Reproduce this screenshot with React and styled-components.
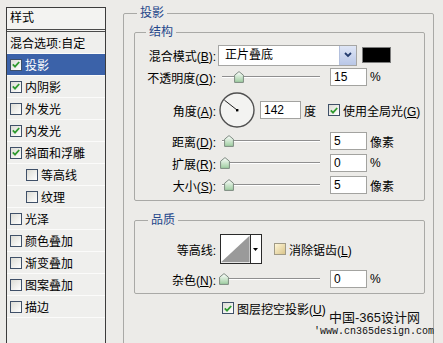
import React from "react"
import styled, { createGlobalStyle } from "styled-components"

const uiFont = `"Liberation Sans", "Noto Sans CJK SC", sans-serif`
const legendBlue = "#24468a"

const GlobalStyle = createGlobalStyle`
  html, body {
    margin: 0;
    padding: 0;
    background: #ecebe8;
    overflow: hidden;
  }
  body {
    font-family: ${uiFont};
    font-size: 12px;
    color: #000;
  }
`

const Screen = styled.div`
  position: relative;
  width: 443px;
  height: 343px;
  display: flex;
  align-items: flex-start;
  gap: 17px;
  padding-left: 6px;
  box-sizing: border-box;
  overflow: hidden;
`

/* ---------- left style list ---------- */

const StyleList = styled.div`
  flex: none;
  width: 100px;
  height: 360px;
  margin-top: 7px;
  box-sizing: border-box;
  border: 1px solid #3c3c3c;
  background: #efefed;
`

const ListHeader = styled.div`
  height: 21px;
  line-height: 21px;
  padding-left: 3px;
  border-bottom: 3px double #4a4a4a;
  background: #f3f3f1;
`

const ListRow = styled.div`
  display: flex;
  align-items: center;
  gap: 3px;
  height: 21px;
  padding-left: ${(p) => (p.$indent ? 19 : 3)}px;
  border-bottom: 1px solid #fbfbfa;
  background: ${(p) => (p.$active ? "#3b62a9" : "transparent")};
  color: ${(p) => (p.$active ? "#fff" : "#000")};
`

const Box = styled.span`
  flex: none;
  display: inline-flex;
  align-items: center;
  justify-content: center;
  width: 12px;
  height: 12px;
  box-sizing: border-box;
  border: 1px solid ${(p) => (p.$beige ? "#a09a86" : "#3f5068")};
  background: ${(p) =>
    p.$beige
      ? "linear-gradient(135deg, #fff6d8, #d9c48a)"
      : "linear-gradient(135deg, #dcdcd5, #ffffff)"};
`

const Check = ({ on, beige }) => (
  <Box $beige={beige}>
    {on && (
      <svg width="8" height="7" viewBox="0 0 8 7">
        <path d="M0.8 3.4 L3 5.6 L7.2 1" fill="none" stroke="#2f9a2f" strokeWidth="1.8" />
      </svg>
    )}
  </Box>
)

const styleItems = [
  { label: "投影", on: true, active: true },
  { label: "内阴影", on: true },
  { label: "外发光" },
  { label: "内发光", on: true },
  { label: "斜面和浮雕", on: true },
  { label: "等高线", indent: true },
  { label: "纹理", indent: true },
  { label: "光泽" },
  { label: "颜色叠加" },
  { label: "渐变叠加" },
  { label: "图案叠加" },
  { label: "描边" },
]

/* ---------- right settings ---------- */

const Group = styled.fieldset`
  margin: 0;
  min-width: 0;
  border: 1px solid #a9a9a6;
  border-radius: 2px;
  box-sizing: border-box;
  padding: ${(p) => p.$pad};
`

const Outer = styled(Group)`
  flex: none;
  width: 311px;
  height: 400px;
  margin-top: 6px;
`

const Legend = styled.legend`
  margin-left: ${(p) => p.$shift}px;
  padding: 0 3px;
  line-height: 14px;
  color: ${legendBlue};
`

const Row = styled.div`
  display: flex;
  align-items: center;
  height: ${(p) => p.$h || 22}px;
  margin-top: ${(p) => p.$mt || 0}px;
  padding-left: ${(p) => p.$pl || 0}px;
  white-space: nowrap;
`

const Label = styled.span`
  flex: none;
  width: ${(p) => p.$w || 81}px;
  text-align: right;
`

const Select = styled.div`
  display: flex;
  align-items: stretch;
  width: 139px;
  height: 21px;
  margin-left: 2px;
  box-sizing: border-box;
  border: 1px solid #a6a6a4;
  background: #fff;
`

const SelectText = styled.span`
  flex: 1;
  padding-left: 6px;
  line-height: 19px;
`

const SelectButton = styled.span`
  display: flex;
  align-items: center;
  justify-content: center;
  width: 16px;
  border-left: 1px solid #b3c0dd;
  background: linear-gradient(#dfe6f6, #b9c7e7);
`

const Swatch = styled.span`
  width: 29px;
  height: 16px;
  margin-left: 5px;
  box-sizing: border-box;
  border: 1px solid #7c7c7c;
  background: #000;
`

const Track = styled.div`
  position: relative;
  flex: none;
  width: 101px;
  height: 14px;
  margin-left: ${(p) => p.$ml || 3}px;

  &::before {
    content: "";
    position: absolute;
    left: 3px;
    right: 0;
    top: 6px;
    border-top: 1px solid #8f8f8f;
    border-bottom: 1px solid #fff;
  }
`

const Thumb = styled.span`
  position: absolute;
  top: 1px;
  width: 10px;
  height: 12px;
`

const Slider = ({ pos, ml }) => (
  <Track $ml={ml}>
    <Thumb style={{ left: pos }}>
      <svg width="10" height="12" viewBox="0 0 10 12">
        <defs>
          <linearGradient id="th" x1="0" y1="0" x2="0" y2="1">
            <stop offset="0" stopColor="#ffffff" />
            <stop offset="1" stopColor="#9ccc9e" />
          </linearGradient>
        </defs>
        <path d="M5 0.6 L9.4 4.2 V11.4 H0.6 V4.2 Z" fill="url(#th)" stroke="#7d8a80" strokeWidth="1" />
      </svg>
    </Thumb>
  </Track>
)

const NumBox = styled.div`
  flex: none;
  width: ${(p) => p.$w || 37}px;
  height: 18px;
  margin-left: ${(p) => p.$ml || 10}px;
  padding-left: 3px;
  box-sizing: border-box;
  border: 1px solid #a3a3a0;
  background: #fff;
  font-size: 12px;
  line-height: 16px;
`

const Unit = styled.span`
  margin-left: ${(p) => p.$ml || 3}px;
`

const Dial = styled.svg`
  flex: none;
  margin-left: 2px;
`

const CheckLabel = styled.span`
  display: inline-flex;
  align-items: center;
  gap: 3px;
  margin-left: ${(p) => p.$ml || 0}px;
`

const Contour = styled.div`
  flex: none;
  display: flex;
  width: 42px;
  height: 30px;
  margin-left: 4px;
  box-sizing: border-box;
  border: 1px solid #2a2a2a;
  background: #fff;
`

const ContourArrow = styled.span`
  display: flex;
  align-items: center;
  justify-content: center;
  width: 11px;
  border-left: 1px solid #2a2a2a;
`

const Watermark = styled.div`
  position: absolute;
  right: 10px;
  top: 310px;
  display: flex;
  flex-direction: column;
  align-items: flex-end;
  color: #111;
`

const MarkTitle = styled.span`
  margin-right: 13px;
  font-size: 13px;
  line-height: 15px;
`

const MarkUrl = styled.span`
  font-family: "Liberation Mono", monospace;
  font-size: 10px;
  line-height: 13px;
  margin-right: -1px;
`

const Angle = () => {
  const r = 16
  const a = (142 * Math.PI) / 180
  const x = 19 + r * Math.cos(a)
  const y = 19 - r * Math.sin(a)
  return (
    <Dial width="38" height="38" viewBox="0 0 38 38">
      <circle cx="19" cy="19" r="17" fill="#f3f3f1" stroke="#505050" strokeWidth="1.4" />
      <line x1="19" y1="19" x2={x} y2={y} stroke="#222" strokeWidth="1" />
      <rect x="18" y="18" width="2.4" height="2.4" fill="#000" />
    </Dial>
  )
}

export default function App() {
  return (
    <Screen>
      <GlobalStyle />
      <StyleList>
        <ListHeader>样式</ListHeader>
        <ListRow>混合选项:自定</ListRow>
        {styleItems.map((s) => (
          <ListRow key={s.label} $active={s.active} $indent={s.indent}>
            <Check on={s.on} />
            {s.label}
          </ListRow>
        ))}
      </StyleList>

      <Outer $pad="5px 8px 0 10px">
        <Legend $shift={3}>投影</Legend>

        <Group $pad="5px 0 4px 0">
          <Legend $shift={11}>结构</Legend>
          <Row>
            <Label>混合模式(<u>B</u>):</Label>
            <Select>
              <SelectText>正片叠底</SelectText>
              <SelectButton>
                <svg width="8" height="6" viewBox="0 0 8 6">
                  <path d="M1 1 L4 4 L7 1" fill="none" stroke="#243c6e" strokeWidth="1.8" />
                </svg>
              </SelectButton>
            </Select>
            <Swatch />
          </Row>
          <Row>
            <Label>不透明度(<u>O</u>):</Label>
            <Slider pos={15} />
            <NumBox>15</NumBox>
            <Unit>%</Unit>
          </Row>
          <Row $h={38} $mt={3}>
            <Label>角度(<u>A</u>):</Label>
            <Angle />
            <NumBox $w={41} $ml={4}>142</NumBox>
            <Unit>度</Unit>
            <CheckLabel $ml={12}>
              <Check on />
              <span>使用全局光(<u>G</u>)</span>
            </CheckLabel>
          </Row>
          <Row $mt={1}>
            <Label>距离(<u>D</u>):</Label>
            <Slider pos={5} />
            <NumBox>5</NumBox>
            <Unit>像素</Unit>
          </Row>
          <Row>
            <Label>扩展(<u>R</u>):</Label>
            <Slider pos={1} />
            <NumBox>0</NumBox>
            <Unit>%</Unit>
          </Row>
          <Row>
            <Label>大小(<u>S</u>):</Label>
            <Slider pos={5} />
            <NumBox>5</NumBox>
            <Unit>像素</Unit>
          </Row>
        </Group>

        <Group $pad="5px 0 3px 0" style={{ marginTop: 12 }}>
          <Legend $shift={13}>品质</Legend>
          <Row $h={34}>
            <Label>等高线:</Label>
            <Contour>
              <svg width="30" height="28" viewBox="0 0 30 28">
                <path d="M0 28 L30 0 V28 Z" fill="#9a9a9a" />
              </svg>
              <ContourArrow>
                <svg width="5" height="3" viewBox="0 0 5 3">
                  <path d="M0 0 H5 L2.5 3 Z" fill="#000" />
                </svg>
              </ContourArrow>
            </Contour>
            <CheckLabel $ml={12}>
              <Check beige />
              <span>消除锯齿(<u>L</u>)</span>
            </CheckLabel>
          </Row>
          <Row $mt={2}>
            <Label>杂色(<u>N</u>):</Label>
            <Slider pos={0} />
            <NumBox>0</NumBox>
            <Unit>%</Unit>
          </Row>
        </Group>

        <Row $h={20} $mt={4} $pl={88}>
          <CheckLabel>
            <Check on />
            <span>图层挖空投影(<u>U</u>)</span>
          </CheckLabel>
        </Row>
      </Outer>

      <Watermark>
        <MarkTitle>中国-365设计网</MarkTitle>
        <MarkUrl>'www.cn365design.com</MarkUrl>
      </Watermark>
    </Screen>
  )
}
